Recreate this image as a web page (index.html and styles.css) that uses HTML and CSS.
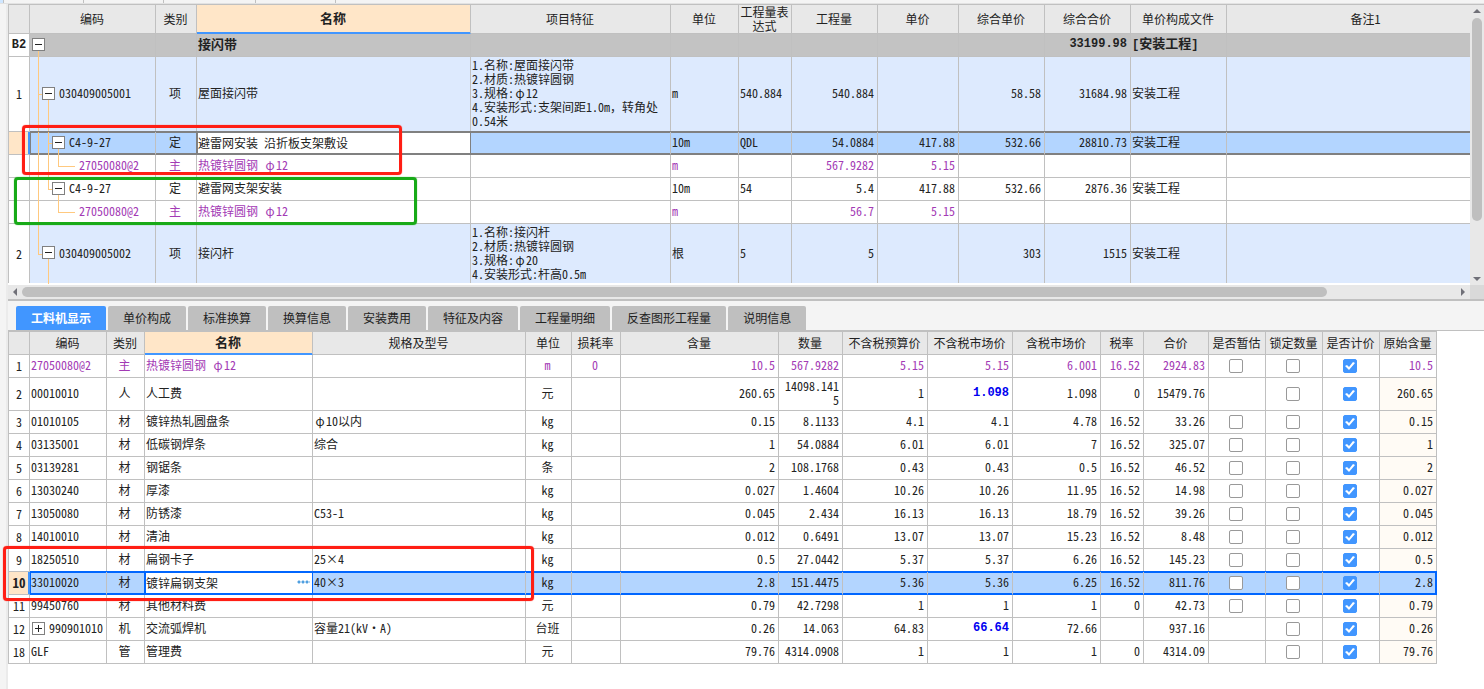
FILE: index.html
```html
<!DOCTYPE html>
<html lang="zh-CN">
<head>
<meta charset="utf-8">
<title>工料机显示</title>
<link rel="stylesheet" href="styles.css">
</head>
<body>
<div class="strip"><i class="blue"></i><i></i><i></i><i class="wide"></i><i></i></div>
<main class="app">
<section class="upper">
<div class="pane">
<table class="grid bill">
<colgroup><col class="w21"><col class="w126"><col class="w41"><col class="w274"><col class="w200"><col class="w68"><col class="w53"><col class="w86"><col class="w81"><col class="w86"><col class="w86"><col class="w96"><col></colgroup>
<thead><tr><th></th><th>编码</th><th>类别</th><th class="cur">名称</th><th>项目特征</th><th>单位</th><th>工程量表达式</th><th>工程量</th><th>单价</th><th>综合单价</th><th>综合合价</th><th>单价构成文件</th><th>备注1</th></tr></thead>
<tbody>
<tr class="group"><td class="no">B2</td><td class="code"><i class="v k1 low"></i><div class="node"><button class="tg" aria-label="折叠"></button></div></td><td></td><td>接闪带</td><td></td><td></td><td></td><td></td><td></td><td></td><td class="r num">33199.98</td><td><span class="num">[</span>安装工程<span class="num">]</span></td><td></td></tr>
<tr class="item"><td class="no">1</td><td class="code"><i class="v k1"></i><i class="h k1"></i><i class="v k2 low"></i><div class="node n2"><button class="tg" aria-label="折叠"></button>030409005001</div></td><td class="c">项</td><td>屋面接闪带</td><td class="feat">1.名称:屋面接闪带<br>2.材质:热镀锌圆钢<br>3.规格:<span class="phi">φ</span>12<br>4.安装形式:支架间距1.0m，转角处0.54米</td><td>m</td><td>540.884</td><td class="r">540.884</td><td></td><td class="r">58.58</td><td class="r">31684.98</td><td>安装工程</td><td></td></tr>
<tr class="sel"><td class="no"></td><td class="code"><i class="v k1"></i><i class="v k2"></i><i class="h k2"></i><i class="v k3 low"></i><div class="node n3"><button class="tg" aria-label="折叠"></button>C4-9-27</div></td><td class="c">定</td><td class="edit"><input type="text" aria-label="名称" value="避雷网安装 沿折板支架敷设"></td><td></td><td>10m</td><td>QDL</td><td class="r">54.0884</td><td class="r">417.88</td><td class="r">532.66</td><td class="r">28810.73</td><td>安装工程</td><td></td></tr>
<tr class="main"><td class="no"></td><td class="code"><i class="v k1"></i><i class="v k2"></i><i class="v k3 top"></i><i class="h k3 long"></i><div class="node n4">27050080@2</div></td><td class="c">主</td><td>热镀锌圆钢 <span class="phi">φ</span>12</td><td></td><td>m</td><td></td><td class="r">567.9282</td><td class="r">5.15</td><td></td><td></td><td></td><td></td></tr>
<tr><td class="no"></td><td class="code"><i class="v k1"></i><i class="v k2 top"></i><i class="h k2"></i><i class="v k3 low"></i><div class="node n3"><button class="tg" aria-label="折叠"></button>C4-9-27</div></td><td class="c">定</td><td>避雷网支架安装</td><td></td><td>10m</td><td>54</td><td class="r">5.4</td><td class="r">417.88</td><td class="r">532.66</td><td class="r">2876.36</td><td>安装工程</td><td></td></tr>
<tr class="main"><td class="no"></td><td class="code"><i class="v k1"></i><i class="v k3 top"></i><i class="h k3 long"></i><div class="node n4">27050080@2</div></td><td class="c">主</td><td>热镀锌圆钢 <span class="phi">φ</span>12</td><td></td><td>m</td><td></td><td class="r">56.7</td><td class="r">5.15</td><td></td><td></td><td></td><td></td></tr>
<tr class="item last"><td class="no">2</td><td class="code"><i class="v k1 top"></i><i class="h k1"></i><i class="v k2 low"></i><div class="node n2"><button class="tg" aria-label="折叠"></button>030409005002</div></td><td class="c">项</td><td>接闪杆</td><td class="feat">1.名称:接闪杆<br>2.材质:热镀锌圆钢<br>3.规格:<span class="phi">φ</span>20<br>4.安装形式:杆高0.5m</td><td>根</td><td>5</td><td class="r">5</td><td></td><td class="r">303</td><td class="r">1515</td><td>安装工程</td><td></td></tr>
</tbody>
</table>
<div class="vbar"><i class="arrow up"></i><div class="track"><div class="thumb"></div></div><i class="arrow down"></i></div>
<div class="hbar"><i class="arrow left"></i><div class="track"><div class="thumb"></div></div><i class="arrow right"></i></div>
<div class="corner"></div>
</div>
</section>
<nav class="tabs" role="tablist">
<button class="on" role="tab">工料机显示</button><button role="tab">单价构成</button><button role="tab">标准换算</button><button role="tab">换算信息</button><button role="tab">安装费用</button><button role="tab">特征及内容</button><button role="tab">工程量明细</button><button role="tab">反查图形工程量</button><button role="tab">说明信息</button>
</nav>
<section class="lower">
<table class="grid res">
<colgroup><col class="w21"><col class="w77"><col class="w38"><col class="w168"><col class="w213"><col class="w46"><col class="w49"><col class="w158"><col class="w64"><col class="w85"><col class="w85"><col class="w88"><col class="w43"><col class="w65"><col class="w57"><col class="w57"><col class="w57"><col class="w57"></colgroup>
<thead><tr><th></th><th>编码</th><th>类别</th><th class="cur">名称</th><th>规格及型号</th><th>单位</th><th>损耗率</th><th>含量</th><th>数量</th><th>不含税预算价</th><th>不含税市场价</th><th>含税市场价</th><th>税率</th><th>合价</th><th id="est">是否暂估</th><th id="lock">锁定数量</th><th id="price">是否计价</th><th>原始含量</th></tr></thead>
<tbody>
<tr class="main"><td class="no">1</td><td>27050080@2</td><td class="c">主</td><td>热镀锌圆钢 <span class="phi">φ</span>12</td><td></td><td class="c">m</td><td class="c">0</td><td class="r">10.5</td><td class="r">567.9282</td><td class="r">5.15</td><td class="r">5.15</td><td class="r">6.001</td><td class="r">16.52</td><td class="r">2924.83</td><td class="c"><input type="checkbox" aria-labelledby="est"></td><td class="c"><input type="checkbox" aria-labelledby="lock"></td><td class="c"><input type="checkbox" aria-labelledby="price" checked></td><td class="r">10.5</td></tr>
<tr class="tall"><td class="no">2</td><td>00010010</td><td class="c">人</td><td>人工费</td><td></td><td class="c">元</td><td></td><td class="r">260.65</td><td class="r brk">14098.1415</td><td class="r">1</td><td class="r hot">1.098</td><td class="r">1.098</td><td class="r">0</td><td class="r">15479.76</td><td></td><td class="c"><input type="checkbox" aria-labelledby="lock"></td><td class="c"><input type="checkbox" aria-labelledby="price" checked></td><td class="r orig">260.65</td></tr>
<tr><td class="no">3</td><td>01010105</td><td class="c">材</td><td>镀锌热轧圆盘条</td><td><span class="phi">φ</span>10以内</td><td class="c">kg</td><td></td><td class="r">0.15</td><td class="r">8.1133</td><td class="r">4.1</td><td class="r">4.1</td><td class="r">4.78</td><td class="r">16.52</td><td class="r">33.26</td><td class="c"><input type="checkbox" aria-labelledby="est"></td><td class="c"><input type="checkbox" aria-labelledby="lock"></td><td class="c"><input type="checkbox" aria-labelledby="price" checked></td><td class="r orig">0.15</td></tr>
<tr><td class="no">4</td><td>03135001</td><td class="c">材</td><td>低碳钢焊条</td><td>综合</td><td class="c">kg</td><td></td><td class="r">1</td><td class="r">54.0884</td><td class="r">6.01</td><td class="r">6.01</td><td class="r">7</td><td class="r">16.52</td><td class="r">325.07</td><td class="c"><input type="checkbox" aria-labelledby="est"></td><td class="c"><input type="checkbox" aria-labelledby="lock"></td><td class="c"><input type="checkbox" aria-labelledby="price" checked></td><td class="r orig">1</td></tr>
<tr><td class="no">5</td><td>03139281</td><td class="c">材</td><td>钢锯条</td><td></td><td class="c">条</td><td></td><td class="r">2</td><td class="r">108.1768</td><td class="r">0.43</td><td class="r">0.43</td><td class="r">0.5</td><td class="r">16.52</td><td class="r">46.52</td><td class="c"><input type="checkbox" aria-labelledby="est"></td><td class="c"><input type="checkbox" aria-labelledby="lock"></td><td class="c"><input type="checkbox" aria-labelledby="price" checked></td><td class="r orig">2</td></tr>
<tr><td class="no">6</td><td>13030240</td><td class="c">材</td><td>厚漆</td><td></td><td class="c">kg</td><td></td><td class="r">0.027</td><td class="r">1.4604</td><td class="r">10.26</td><td class="r">10.26</td><td class="r">11.95</td><td class="r">16.52</td><td class="r">14.98</td><td class="c"><input type="checkbox" aria-labelledby="est"></td><td class="c"><input type="checkbox" aria-labelledby="lock"></td><td class="c"><input type="checkbox" aria-labelledby="price" checked></td><td class="r orig">0.027</td></tr>
<tr><td class="no">7</td><td>13050080</td><td class="c">材</td><td>防锈漆</td><td>C53-1</td><td class="c">kg</td><td></td><td class="r">0.045</td><td class="r">2.434</td><td class="r">16.13</td><td class="r">16.13</td><td class="r">18.79</td><td class="r">16.52</td><td class="r">39.26</td><td class="c"><input type="checkbox" aria-labelledby="est"></td><td class="c"><input type="checkbox" aria-labelledby="lock"></td><td class="c"><input type="checkbox" aria-labelledby="price" checked></td><td class="r orig">0.045</td></tr>
<tr><td class="no">8</td><td>14010010</td><td class="c">材</td><td>清油</td><td></td><td class="c">kg</td><td></td><td class="r">0.012</td><td class="r">0.6491</td><td class="r">13.07</td><td class="r">13.07</td><td class="r">15.23</td><td class="r">16.52</td><td class="r">8.48</td><td class="c"><input type="checkbox" aria-labelledby="est"></td><td class="c"><input type="checkbox" aria-labelledby="lock"></td><td class="c"><input type="checkbox" aria-labelledby="price" checked></td><td class="r orig">0.012</td></tr>
<tr><td class="no">9</td><td>18250510</td><td class="c">材</td><td>扁钢卡子</td><td>25<span class="phi">×</span>4</td><td class="c">kg</td><td></td><td class="r">0.5</td><td class="r">27.0442</td><td class="r">5.37</td><td class="r">5.37</td><td class="r">6.26</td><td class="r">16.52</td><td class="r">145.23</td><td class="c"><input type="checkbox" aria-labelledby="est"></td><td class="c"><input type="checkbox" aria-labelledby="lock"></td><td class="c"><input type="checkbox" aria-labelledby="price" checked></td><td class="r orig">0.5</td></tr>
<tr class="sel"><td class="no">10</td><td>33010020</td><td class="c">材</td><td class="edit"><div class="field"><input type="text" aria-label="名称" value="镀锌扁钢支架"><button class="more" aria-label="更多"></button></div></td><td>40<span class="phi">×</span>3</td><td class="c">kg</td><td></td><td class="r">2.8</td><td class="r">151.4475</td><td class="r">5.36</td><td class="r">5.36</td><td class="r">6.25</td><td class="r">16.52</td><td class="r">811.76</td><td class="c"><input type="checkbox" aria-labelledby="est"></td><td class="c"><input type="checkbox" aria-labelledby="lock"></td><td class="c"><input type="checkbox" aria-labelledby="price" checked></td><td class="r">2.8</td></tr>
<tr><td class="no">11</td><td>99450760</td><td class="c">材</td><td>其他材料费</td><td></td><td class="c">元</td><td></td><td class="r">0.79</td><td class="r">42.7298</td><td class="r">1</td><td class="r">1</td><td class="r">1</td><td class="r">0</td><td class="r">42.73</td><td class="c"><input type="checkbox" aria-labelledby="est"></td><td class="c"><input type="checkbox" aria-labelledby="lock"></td><td class="c"><input type="checkbox" aria-labelledby="price" checked></td><td class="r orig">0.79</td></tr>
<tr><td class="no">12</td><td class="code"><div class="node"><button class="tg plus" aria-label="展开"></button>990901010</div></td><td class="c">机</td><td>交流弧焊机</td><td>容量21(kV<span class="phi">·</span>A)</td><td class="c">台班</td><td></td><td class="r">0.26</td><td class="r">14.063</td><td class="r">64.83</td><td class="r hot">66.64</td><td class="r">72.66</td><td></td><td class="r">937.16</td><td></td><td class="c"><input type="checkbox" aria-labelledby="lock"></td><td class="c"><input type="checkbox" aria-labelledby="price" checked></td><td class="r orig">0.26</td></tr>
<tr><td class="no">18</td><td>GLF</td><td class="c">管</td><td>管理费</td><td></td><td class="c">元</td><td></td><td class="r">79.76</td><td class="r">4314.0908</td><td class="r">1</td><td class="r">1</td><td class="r">1</td><td class="r">0</td><td class="r">4314.09</td><td></td><td class="c"><input type="checkbox" aria-labelledby="lock"></td><td class="c"><input type="checkbox" aria-labelledby="price" checked></td><td class="r orig">79.76</td></tr>
</tbody>
</table>
</section>
</main>
<div class="mark m1"></div>
<div class="mark m2"></div>
<div class="mark m3"></div>
</body>
</html>
```

FILE: styles.css
```css
* { box-sizing: border-box; }

body {
  margin: 0;
  min-height: 100vh;
  display: flex;
  flex-direction: column;
  position: relative;
  background: #f4f4f4;
  color: #222;
  font: 12px/14px "Noto Sans Mono CJK SC", "Noto Sans CJK SC", sans-serif;
}

button, input { font: inherit; color: inherit; margin: 0; padding: 0; border: 0; }

/* bottom edge of the toolbar */
.strip { height: 4px; display: flex; border-bottom: 1px solid #e2e2e2; }
.strip i { width: 80px; border-right: 1px solid #c0c0c0; }
.strip .blue { width: 4px; background: #cfe6ff; }
.strip .wide { width: 92px; }

.app {
  flex: 1;
  display: flex;
  flex-direction: column;
  margin-left: 6px;
  border-left: 2px solid #ebebeb;
}

.upper { border-bottom: 2px solid #c0c0c0; }
.pane {
  display: grid;
  grid-template-columns: 1fr 14px;
  background: #fff;
}

/* grids */
.grid {
  table-layout: fixed;
  border-collapse: separate;
  border-spacing: 0;
  border-left: 1px solid #c0c0c0;
  border-top: 1px solid #c0c0c0;
}
.bill { width: 100%; margin-bottom: 2px; }
.res { width: 1429px; }

.w21 { width: 21px; } .w38 { width: 38px; } .w41 { width: 41px; } .w43 { width: 43px; }
.w46 { width: 46px; } .w49 { width: 49px; } .w53 { width: 53px; } .w57 { width: 57px; }
.w64 { width: 64px; } .w65 { width: 65px; } .w68 { width: 68px; } .w77 { width: 77px; }
.w81 { width: 81px; } .w85 { width: 85px; } .w86 { width: 86px; } .w88 { width: 88px; }
.w96 { width: 96px; } .w126 { width: 126px; } .w158 { width: 158px; } .w168 { width: 168px; }
.w200 { width: 200px; } .w213 { width: 213px; } .w274 { width: 274px; }

.grid th, .grid td {
  height: 23px;
  padding: 0 3px 2px 1px;
  border-right: 1px solid #c0c0c0;
  border-bottom: 1px solid #c0c0c0;
  text-align: left;
  vertical-align: middle;
  position: relative;
}
.bill th:last-child, .bill td:last-child { border-right: 0; }
.grid td { white-space: nowrap; }
.grid th { background: #e8e8e8; text-align: center; font-weight: normal; padding: 0 2px 0 1px; }
.bill th { height: 29px; }
.bill th:last-child { padding-left: 36px; }
.grid th.cur {
  background: #ffe6c8;
  border-bottom-color: #4196ff;
  box-shadow: inset 0 -1px #4196ff;
  font-weight: bold;
  font-size: 13px;
  padding-bottom: 2px;
}
.grid td.c { text-align: center; }
.grid td.r { text-align: right; }
.grid td.brk { white-space: normal; word-break: break-all; }
.grid td.feat { white-space: normal; vertical-align: top; padding-top: 1px; }
.grid .tall td { height: 33px; }
.grid td.no { background: #fff; padding: 0; text-align: center; }
.phi { display: inline-block; width: 12px; text-align: center; }

.item td { background: #ddeafe; }
.grid .item td { height: 75px; }
.grid .last td { height: 59px; border-bottom: 0; }
.group td { background: #c3c3c3; font-weight: bold; font-size: 13px; }
.group td.no, .group .num, td.hot { font: bold 12px/14px "Liberation Mono", monospace; }
td.hot { color: #0000f0; }
.main td { color: #a33ab5; }
.main td.no { color: #222; }
.grid td.orig { background: #fffbf5; }

/* selected rows */
.bill { --ring: #808080; }
.res { --ring: #0066ff; }
.sel td {
  background: #b3d5ff;
  box-shadow: 0 -1px var(--ring), inset 0 -1px var(--ring);
}
.grid .sel td { border-bottom-color: var(--ring); }
.bill .sel td { box-shadow: 0 -1px var(--ring), inset 0 1px var(--ring), inset 0 -1px var(--ring); }
.res .sel td { box-shadow: 0 -1px var(--ring), inset 0 1px var(--ring), inset 0 -1px var(--ring); }
.grid .sel td.no {
  background: #ffe6c8;
  border-right-color: #4196ff;
  border-bottom-color: #c0c0c0;
  box-shadow: inset -1px 0 #4196ff;
  font-weight: bold;
  font-size: 13px;
}
.grid .sel td:nth-child(2) { border-left: 1px solid var(--ring); padding-left: 0; }
.grid .sel td:nth-child(3) { border-right-color: var(--ring); }
.grid .sel td.edit {
  background: #fff;
  padding: 0 2px 2px 0;
  border-left: 1px solid var(--ring);
  border-right-color: var(--ring);
}
.res .sel td:last-child { border-right: 2px solid var(--ring); padding-right: 2px; }
.edit input { display: block; width: 100%; height: 18px; background: none; outline: 0; }
.field { display: flex; align-items: center; }
.more {
  width: 14px;
  height: 14px;
  background: radial-gradient(circle, #4f9fe0 1px, transparent 2px) 0 0 / 4px 14px;
}

/* code tree */
.node { display: flex; align-items: center; gap: 4px; position: relative; padding-left: 1px; }
.n2 { padding-left: 11px; }
.n3 { padding-left: 21px; }
.n4 { padding-left: 48px; }
.v, .h { position: absolute; background: #ffc97f; }
.v { width: 1px; top: 0; bottom: -1px; }
.v.top { bottom: 50%; }
.v.low { top: 50%; }
.h { height: 1px; width: 6px; top: 50%; }
.h.long { width: 17px; }
.k1 { left: 8px; }
.k2 { left: 18px; }
.k3 { left: 28px; }
.sel .k1 { left: 7px; }
.sel .k2 { left: 17px; }
.sel .k3 { left: 27px; }
.tg {
  flex: none;
  width: 13px;
  height: 13px;
  border: 1px solid #808080;
  background: linear-gradient(#222, #222) center / 7px 1px no-repeat #fff;
}
.tg.plus {
  background: linear-gradient(#222, #222) center / 7px 1px no-repeat, linear-gradient(#222, #222) center / 1px 7px no-repeat, #fff;
}

/* scroll bars */
.vbar { display: flex; flex-direction: column; background: #e8e8e8; border-top: 1px solid #c0c0c0; }
.hbar { display: flex; height: 14px; background: #e8e8e8; }
.corner { background: #d9d9d9; }
.track { flex: 1; }
.thumb { background: #bfbfbf; border-radius: 5px; }
.vbar .thumb { width: 10px; height: 80%; margin: 0 2px; }
.hbar .thumb { width: 91%; height: 10px; margin: 2px 0; }
.arrow { flex: none; width: 14px; height: 13px; background: #707078; }
.arrow.up { clip-path: polygon(3px 8px, 7px 4px, 11px 8px); }
.arrow.down { clip-path: polygon(3px 5px, 11px 5px, 7px 9px); }
.arrow.left { clip-path: polygon(9px 3px, 9px 11px, 5px 7px); height: 14px; }
.arrow.right { clip-path: polygon(5px 3px, 5px 11px, 9px 7px); height: 14px; }

/* tabs */
.tabs {
  display: flex;
  gap: 2px;
  padding: 5px 8px 0;
  border-bottom: 1px solid #c0c0c0;
}
.tabs button {
  height: 24px;
  padding: 0 15px;
  background: #bfbfbf;
  border-radius: 2px 2px 0 0;
}
.tabs .on { background: #4196ff; color: #fff; font-weight: bold; }

.lower { flex: 1; background: #fff; }

input[type="checkbox"] {
  appearance: none;
  display: block;
  width: 14px;
  height: 14px;
  margin: 2px auto 0;
  border: 1px solid #999;
  border-radius: 2px;
  background: #fff;
}
input[type="checkbox"]:checked { background: #4196ff; border-color: #4196ff; }
input[type="checkbox"]:checked::after {
  content: "";
  display: block;
  width: 12px;
  height: 12px;
  background: #fff;
  clip-path: polygon(1px 6px, 3px 5px, 5px 7px, 9px 2px, 11px 3px, 5px 10px);
}

/* highlight frames drawn over the grids */
.mark { position: absolute; border: 3px solid #ff1e14; border-radius: 4px; pointer-events: none; box-shadow: 0 0 1px #ff1e14; }
.m1 { left: 22px; top: 125px; width: 380px; height: 50px; }
.m2 { left: 14px; top: 177px; width: 403px; height: 48px; border-color: #18aa18; box-shadow: 0 0 1px #18aa18; }
.m3 { left: 3px; top: 546px; width: 531px; height: 55px; }
```
